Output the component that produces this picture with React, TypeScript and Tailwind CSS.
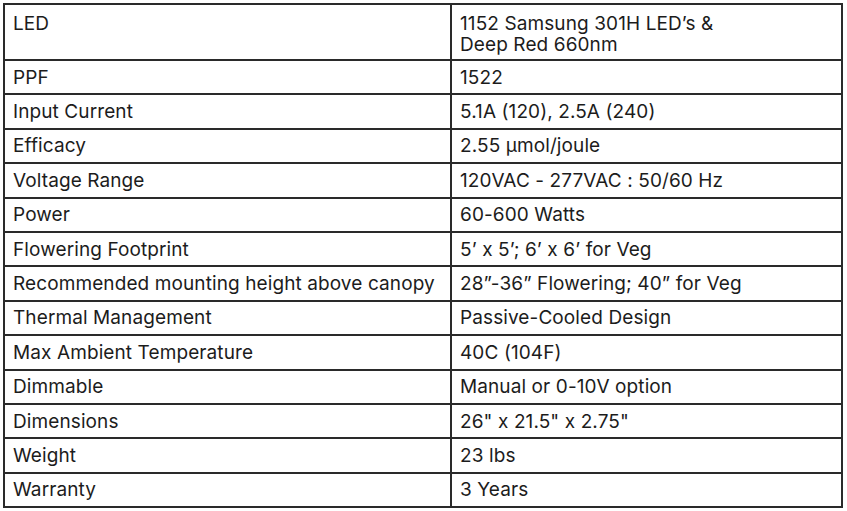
import React from "react";

const rows: [string, string][] = [
  ["PPF", "1522"],
  ["Input Current", "5.1A (120), 2.5A (240)"],
  ["Efficacy", "2.55 µmol/joule"],
  ["Voltage Range", "120VAC - 277VAC : 50/60 Hz"],
  ["Power", "60-600 Watts"],
  ["Flowering Footprint", "5’ x 5’; 6’ x 6’ for Veg"],
  ["Recommended mounting height above canopy", "28”-36” Flowering; 40” for Veg"],
  ["Thermal Management", "Passive-Cooled Design"],
  ["Max Ambient Temperature", "40C (104F)"],
  ["Dimmable", "Manual or 0-10V option"],
  ["Dimensions", "26\" x 21.5\" x 2.75\""],
  ["Weight", "23 lbs"],
  ["Warranty", "3 Years"],
];

export default function App() {
  return (
    <div
      className="w-[847px] h-[511px] bg-white pt-[3px] pl-[3px] text-[#1c1c1c]"
      style={{ fontFamily: "Inter, 'Noto Sans', sans-serif" }}
    >
      <div className="w-[840px] border-2 border-[#2a2a2a] text-[19px] tracking-[0.1px]">
        <div className="flex h-[54px]">
          <div className="w-[447px] border-r-2 border-[#2a2a2a] pl-[8px] pt-[8px] leading-[21px]">LED</div>
          <div className="flex-1 pl-[8px] pt-[8px] leading-[21px]">
            1152 Samsung 301H LED’s &amp;
            <br />
            Deep Red 660nm
          </div>
        </div>
        {rows.map(([k, v]) => (
          <div key={k} className="flex h-[34.4px] border-t-2 border-[#2a2a2a]">
            <div className="w-[447px] border-r-2 border-[#2a2a2a] pl-[8px] flex items-center pt-[1px] leading-[22px]">{k}</div>
            <div className="flex-1 pl-[8px] flex items-center pt-[1px] leading-[22px]">{v}</div>
          </div>
        ))}
      </div>
    </div>
  );
}
